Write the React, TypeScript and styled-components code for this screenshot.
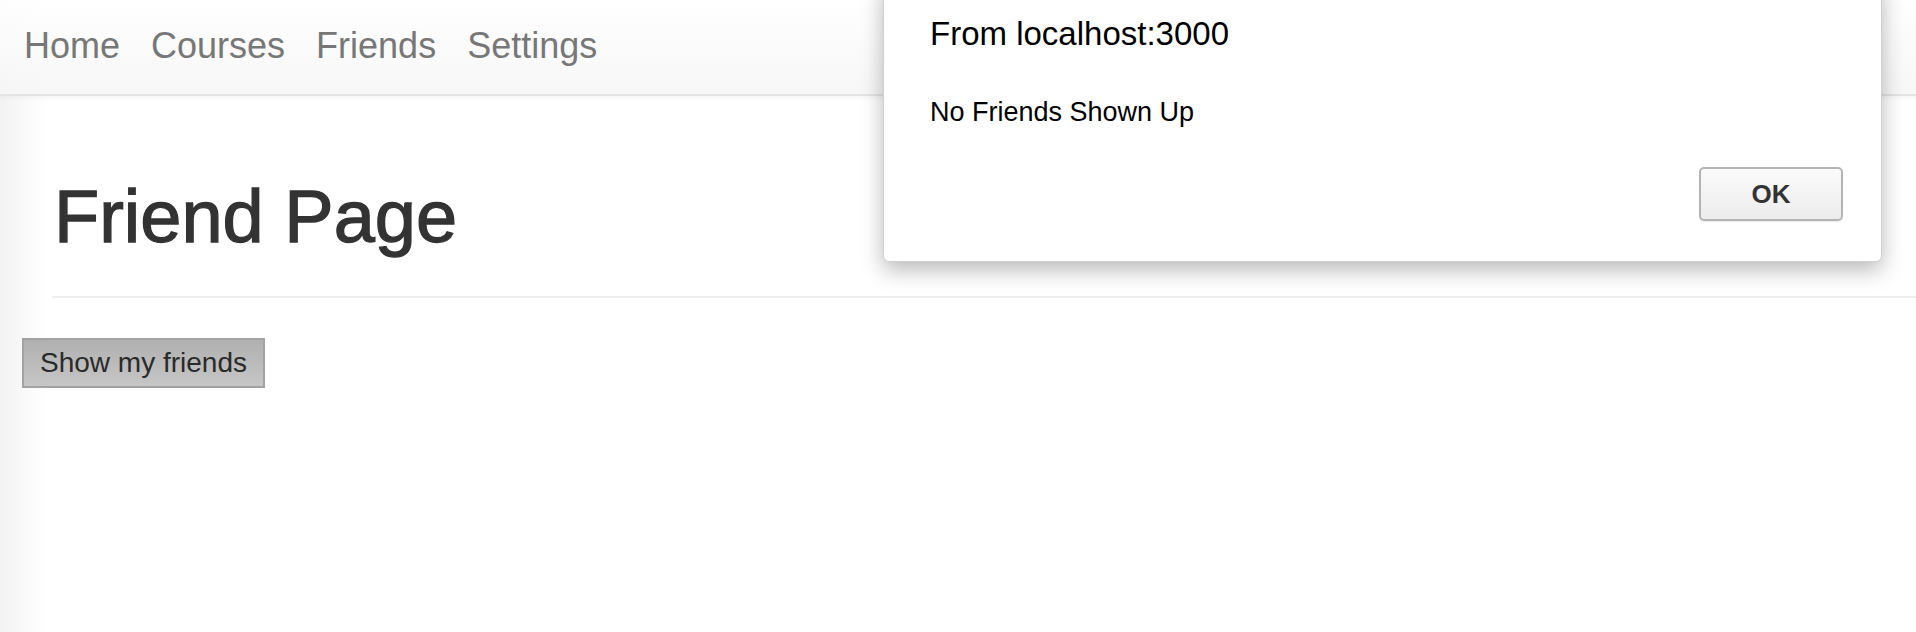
import React from "react";
import styled, { createGlobalStyle } from "styled-components";

const GlobalStyle = createGlobalStyle`
  html, body {
    margin: 0;
    padding: 0;
    width: 1916px;
    height: 632px;
    overflow: hidden;
    background: linear-gradient(to right, #f2f2f2 0px, #fbfbfb 30px, #ffffff 50px);
    font-family: "Liberation Sans", Arial, Helvetica, sans-serif;
  }
  #root {
    position: relative;
    height: 632px;
  }
`;

const Page = styled.div`
  position: relative;
  display: flex;
  flex-direction: column;
  height: 632px;
`;

const NavBar = styled.nav`
  display: flex;
  align-items: flex-start;
  gap: 31px;
  height: 96px;
  box-sizing: border-box;
  padding: 26px 0 0 24px;
  background: linear-gradient(to bottom, rgba(255,255,255,0.9) 0%, rgba(246,246,246,0.9) 100%);
  border-bottom: 2px solid #e4e4e4;
  box-shadow: 0 2px 4px rgba(0, 0, 0, 0.04);
`;

const NavLink = styled.a`
  font-size: 36px;
  line-height: 40px;
  color: #777777;
  text-decoration: none;
`;

const Header = styled.header`
  display: flex;
  flex-direction: column;
  padding: 80px 0 0 54px;
`;

const Title = styled.h1`
  margin: 0;
  font-size: 74px;
  line-height: 81px;
  font-weight: 400;
  color: #333333;
  -webkit-text-stroke: 1.3px #333333;
`;

const Rule = styled.hr`
  margin: 39px 0 0 -2px;
  border: 0;
  border-top: 2px solid #eeeeee;
`;

const Actions = styled.div`
  display: flex;
  padding: 40px 0 0 22px;
`;

const GrayButton = styled.button`
  height: 50px;
  padding: 0 16px;
  font-family: "Liberation Sans", Arial, sans-serif;
  font-size: 28px;
  color: #2a2a2a;
  background: linear-gradient(to bottom, #b0b0b0 0%, #c6c6c6 100%);
  border: 2px solid #a2a2a2;
  border-radius: 0;
  cursor: pointer;
`;

const Dialog = styled.div`
  position: absolute;
  top: -20px;
  left: 883px;
  width: 999px;
  height: 282px;
  box-sizing: border-box;
  display: flex;
  flex-direction: column;
  padding: 33px 38px 40px 46px;
  background: #ffffff;
  border: 1px solid #d0d0d0;
  border-radius: 0 0 6px 6px;
  box-shadow: 0 8px 22px rgba(0, 0, 0, 0.28);
`;

const DialogTitle = styled.div`
  font-size: 33px;
  line-height: 40px;
  color: #000000;
`;

const DialogMessage = styled.div`
  margin-top: 42px;
  font-size: 27px;
  line-height: 32px;
  color: #000000;
`;

const DialogFooter = styled.div`
  display: flex;
  justify-content: flex-end;
  margin-top: auto;
`;

const OkButton = styled.button`
  width: 144px;
  height: 54px;
  font-family: "Liberation Sans", Arial, sans-serif;
  font-size: 26px;
  font-weight: 700;
  color: #333333;
  background: linear-gradient(to bottom, #fbfbfb 0%, #ececec 100%);
  border: 2px solid #b4b4b4;
  border-radius: 5px;
  box-shadow: 0 1px 1px rgba(0, 0, 0, 0.08);
  cursor: pointer;
`;

export default function App() {
  return (
    <>
      <GlobalStyle />
      <Page>
        <NavBar>
          <NavLink href="#">Home</NavLink>
          <NavLink href="#">Courses</NavLink>
          <NavLink href="#">Friends</NavLink>
          <NavLink href="#">Settings</NavLink>
        </NavBar>
        <Header>
          <Title>Friend Page</Title>
          <Rule />
        </Header>
        <Actions>
          <GrayButton>Show my friends</GrayButton>
        </Actions>
        <Dialog role="alertdialog">
          <DialogTitle>From localhost:3000</DialogTitle>
          <DialogMessage>No Friends Shown Up</DialogMessage>
          <DialogFooter>
            <OkButton>OK</OkButton>
          </DialogFooter>
        </Dialog>
      </Page>
    </>
  );
}
